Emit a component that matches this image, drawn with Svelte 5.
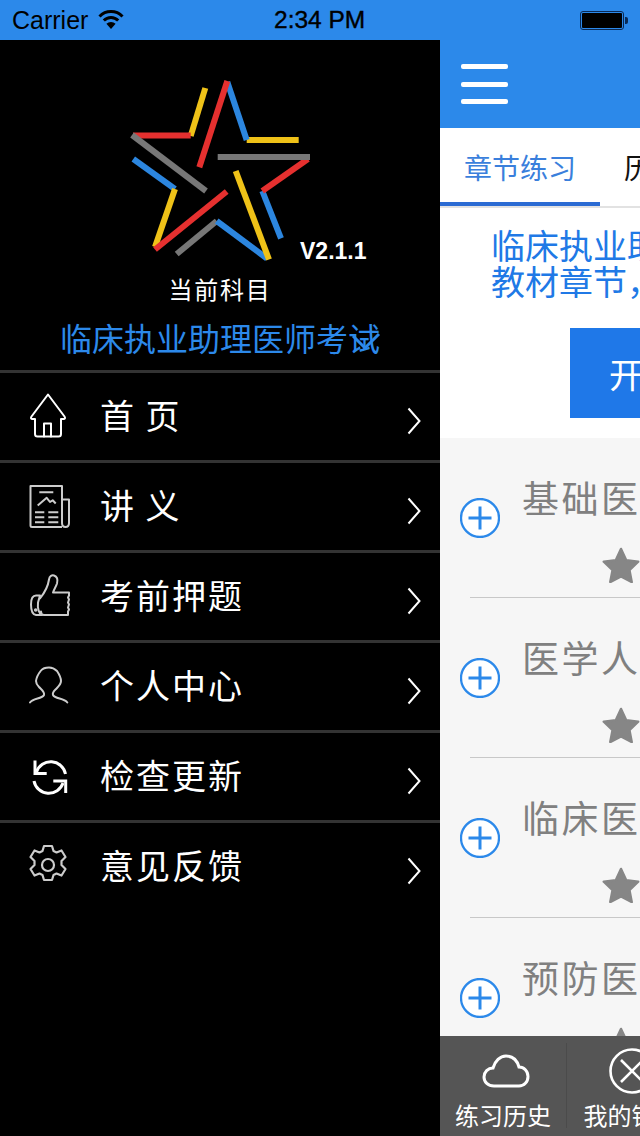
<script>
  const menu = [
    { label: '首 页', icon: 'home' },
    { label: '讲 义', icon: 'news' },
    { label: '考前押题', icon: 'thumb' },
    { label: '个人中心', icon: 'user' },
    { label: '检查更新', icon: 'sync' },
    { label: '意见反馈', icon: 'gear' }
  ];
  const logo = [
    ['y', 205.3, 88, 190.7, 136], ['r', 133, 135.5, 190.7, 135.5], ['g', 132, 135, 206, 191],
    ['b', 133.3, 159, 175, 189], ['y', 175, 189, 155, 247], ['r', 155, 249.5, 226.7, 191.5],
    ['g', 176.7, 254, 216.7, 221], ['b', 216.7, 221, 267, 258.5], ['y', 269, 259.5, 235.7, 171],
    ['b', 281, 238.3, 262.3, 191], ['r', 262.3, 191, 308, 159], ['g', 217.7, 157, 310, 157],
    ['y', 246.7, 140, 298.7, 140], ['b', 246.7, 140, 227.3, 82], ['r', 227.3, 81, 199.3, 167.3]
  ];
  const colors = { y: '#efc218', r: '#e5302f', g: '#777777', b: '#2c86df' };
  const rows = ['基础医学综合', '医学人文综合', '临床医学综合', '预防医学综合'];
</script>

<div class="screen">
  <header class="status">
    <span class="carrier">Carrier</span>
    <svg class="wifi" viewBox="0 0 26 20" width="26" height="20">
      <path d="M1.5 7.5a16 16 0 0 1 23 0" fill="none" stroke="#000" stroke-width="3"/>
      <path d="M5.8 11.5a10 10 0 0 1 14.4 0" fill="none" stroke="#000" stroke-width="3"/>
      <path d="M13 20l-4.6-5.2a6.5 6.5 0 0 1 9.2 0z" fill="#000"/>
    </svg>
    <span class="time">2:34 PM</span>
    <span class="battery"><i></i></span>
  </header>

  <div class="body">
    <aside class="side">
      <div class="brand">
        <svg class="logo" viewBox="120 70 200 200" width="200" height="200">
          {#each logo as [c, x1, y1, x2, y2]}
            <line {x1} {y1} {x2} {y2} stroke={colors[c]} stroke-width="6" />
          {/each}
        </svg>
        <span class="version">V2.1.1</span>
        <div class="current">当前科目</div>
        <div class="subject">临床执业助理医师考试<svg class="mark" viewBox="0 0 30 22" width="30" height="22"><path d="M2 5l12 12L28 3" fill="none" stroke="#2c89ea" stroke-width="3"/></svg></div>
      </div>

      <nav>
        {#each menu as item}
          <div class="item">
            <svg class="ico" viewBox="0 0 44 48" width="44" height="48" fill="none" stroke="#fff" stroke-width="2" stroke-linejoin="round" stroke-linecap="round">
              {#if item.icon === 'home'}
                <path d="M21 1.500L4.500 23.500c-1 1.500-.5 2.500 1 2.500H8V41c0 1.500 1 2.500 2.500 2.500h21c1.500 0 2.500-1 2.500-2.500V26h2.500c1.500 0 2-1 1-2.500z"/>
                <path d="M17 43.500V30.500h7v13"/>
              {:else if item.icon === 'news'}
                <g stroke="#ccc" stroke-linecap="butt">
                  <path d="M35 44H5c-1 0-1.500-.5-1.500-1.500V3H35v37c0 2.500 1 4 3.500 4s3.500-2 3.500-4V16.500h-7"/>
                  <path d="M12.300 9.200h14M10.700 22.500l9-7.700 3.300 4.200 2.700-1.700 3 3.200M8 29.200h9.300M21.300 29.200h10M8 34.200h9.300M21.300 34.200h10M8 39.200h9.300M21.300 39.200h10"/>
                </g>
              {:else if item.icon === 'thumb'}
                <g stroke="#ccc" transform="translate(0 1.500)">
                  <path d="M13 24C17 19 21 12 22 5c.5-4 3-4.500 5-4 3 1 4 4 3 8-1 3-3 6-4 9h16v3l-1 2 1 2-1 3 1 2-1 3 1 2-1 2v3.500H17c-2 0-3-1.500-3-3.500"/>
                  <path d="M13 21H9c-4 0-5 3-5 9s1 10 5 10.500h6M13 21l-2 7c-.5 5 0 10 4 12.500"/>
                  <circle cx="8.700" cy="35.500" r=".8" fill="#ccc"/>
                </g>
              {:else if item.icon === 'user'}
                <path stroke="#ccc" d="M3 39.500C6 35 15 36 17 32c1-3-2-5-5-8-2-2-3-4-3-6 .5-4 3-8 5-10.500 2-2.500 5-3 8-3 4 0 6 1.500 8 3.500 2 3 4 6 4 10 0 2-2 5-4 7-3 3-5 4-4 7 2 4 11 3 14.300 7.500"/>
              {:else if item.icon === 'sync'}
                <g stroke-width="3" stroke-linecap="butt" stroke-linejoin="miter">
                  <path d="M9.500 19A15 15 0 0 1 38.500 21"/>
                  <path d="M7 28A15 15 0 0 0 36 30"/>
                  <path d="M8 7.500V20.500h11.700"/>
                  <path d="M38.700 40V28H26.300"/>
                </g>
              {:else}
                <g stroke="#ccc" stroke-width="2.200" transform="translate(-2 -2)">
                  <path d="M19 5h8l1.500 5 3 1.500 5-2 4 6.500-4 4v4l4 4-4 6.500-5-2-3 1.500-1.500 5h-8l-1.500-5-3-1.500-5 2-4-6.500 4-4v-4l-4-4 4-6.500 5 2 3-1.500z"/>
                  <circle cx="23" cy="24" r="6"/>
                </g>
              {/if}
            </svg>
            <span class="label">{item.label}</span>
            <svg class="chev" viewBox="0 0 14 28" width="14" height="28"><path d="M1.500 1.500L12.500 14 1.500 26.500" fill="none" stroke="#fff" stroke-width="2"/></svg>
          </div>
        {/each}
      </nav>
    </aside>

    <main class="main">
      <div class="topbar">
        <div class="burger"><i></i><i></i><i></i></div>
      </div>
      <div class="tabs">
        <div class="tab active">章节练习</div>
        <div class="tab">历年真题</div>
      </div>
      <div class="intro">
        <p>临床执业助理医师考试<br />教材章节，分章节练习</p>
        <button class="start">开始练习</button>
      </div>
      <div class="list">
        {#each rows as title}
          <div class="row">
            <svg class="plus" viewBox="0 0 40 40" width="40" height="40">
              <circle cx="20" cy="20" r="19" fill="#fff" stroke="#2c89ea" stroke-width="2.300"/>
              <path d="M8.500 20h23M20 8.500v23" stroke="#2c89ea" stroke-width="3"/>
            </svg>
            <div class="rowbody">
              <div class="title">{title}</div>
              <svg class="star" viewBox="0 0 38 36" width="38" height="36"><path d="M19 2l5.200 11.200 12 1.500-8.800 8.300 2.300 12L19 29.300 8.300 35l2.300-12-8.800-8.300 12-1.500z" fill="#868686" stroke="#868686" stroke-linejoin="round" stroke-width="2.500"/></svg>
            </div>
          </div>
        {/each}
      </div>
      <div class="tabbar">
        <div class="tb">
          <svg class="cloud" viewBox="0 0 48 36" width="48" height="36"><path d="M12 33C6 33 2 29 2 24c0-5 4-9 9-9 2-7 7-12 13-12 7 0 11 4 13 11 5 0 9 4 9 9.500S42 33 37 33z" fill="none" stroke="#fff" stroke-width="3"/></svg>
          <span>练习历史</span>
        </div>
        <div class="tb">
          <svg viewBox="0 0 46 46" width="46" height="46"><circle cx="23" cy="23" r="21.500" fill="none" stroke="#fff" stroke-width="2.600"/><path d="M12 12l22 22M34 12L12 34" stroke="#fff" stroke-width="2.600"/></svg>
          <span>我的错题</span>
        </div>
      </div>
    </main>
  </div>
</div>

<style>
  :global(body) { margin: 0; background: #000; }
  .screen {
    width: 640px; height: 1136px; overflow: hidden; display: flex; flex-direction: column;
    font-family: "Noto Sans CJK SC", "Liberation Sans", sans-serif;
  }
  .status {
    height: 40px; flex: none; background: #2c89ea; position: relative; display: flex; align-items: center;
    padding: 0 12px; box-sizing: border-box; color: #000; font: 25px "Liberation Sans", sans-serif;
  }
  .carrier { margin-right: 10px; }
  .wifi { margin-top: -2px; }
  .time { position: absolute; left: 274px; font-size: 24.500px; -webkit-text-stroke: 0.4px #000; }
  .battery {
    position: absolute; left: 580px; top: 11px; width: 44px; height: 19px; box-sizing: border-box;
    border: 1px solid #0a2a55; border-radius: 3px; padding: 1px;
  }
  .battery i { display: block; height: 100%; background: #000; border-radius: 1px; }
  .battery::after {
    content: ""; position: absolute; left: 44px; top: 5px; width: 3px; height: 7px; background: #0a2a55; border-radius: 0 2px 2px 0;
  }
  .body { flex: 1; display: flex; min-height: 0; }
  .side { flex: 0 0 440px; background: #000; color: #fff; }
  .brand { height: 330px; position: relative; display: flex; flex-direction: column; align-items: center; }
  .logo { display: block; margin-top: 30px; }
  .version {
    position: absolute; left: 300px; top: 198px; font: bold 23px "Liberation Sans", sans-serif;
  }
  .current { font-size: 24px; letter-spacing: 1.700px; line-height: 34px; margin-top: 2px; }
  .subject { position: relative; font-size: 32px; line-height: 44px; color: #2c89ea; margin-top: 9px; }
  .mark { position: absolute; right: -1px; top: 16px; }
  .item {
    height: 90px; box-sizing: border-box; border-top: 3px solid #333; display: flex; align-items: center; position: relative;
    padding-left: 27px;
  }
  .ico { flex: none; }
  .label { margin: 0 0 4px 29px; font-size: 34px; letter-spacing: 2px; white-space: pre; }
  .chev { position: absolute; left: 407px; top: 34px; }
  .main { flex: 0 0 640px; display: flex; flex-direction: column; background: #fff; position: relative; min-height: 0; }
  .topbar { height: 88px; flex: none; background: #2c89ea; display: flex; align-items: center; padding-left: 21px; }
  .burger { display: flex; flex-direction: column; gap: 12.500px; width: 47px; }
  .burger i { display: block; height: 5px; border-radius: 2px; background: #fff; }
  .tabs { height: 80px; flex: none; display: flex; border-bottom: 2px solid #e2e2e2; box-sizing: border-box; }
  .tab { width: 160px; height: 78px; box-sizing: border-box; text-align: center; font-size: 28px; line-height: 78px; color: #111; }
  .tab.active { color: #3a7fdc; border-bottom: 4px solid #2b6bd3; }
  .intro { height: 230px; flex: none; padding-left: 51px; box-sizing: border-box; }
  .intro p { margin: 0; padding-top: 19px; font-size: 34px; line-height: 36px; color: #2079e6; white-space: nowrap; }
  .start {
    display: block; margin: 29px 0 0 79px; width: 300px; height: 90px; border: 0; background: #1f78e8; color: #fff;
    font: 34px "Noto Sans CJK SC", sans-serif; padding: 0; text-align: left; text-indent: 39px;
  }
  .list { flex: 1; min-height: 0; background: #f6f6f6; overflow: hidden; }
  .row { height: 160px; display: flex; align-items: center; padding-left: 20px; position: relative; }
  .row::after { content: ""; position: absolute; left: 30px; right: 0; bottom: 0; height: 1px; background: #c8c8c8; }
  .plus { flex: none; }
  .rowbody { flex: 1; height: 160px; padding-left: 22px; box-sizing: border-box; position: relative; }
  .title { font-size: 37px; letter-spacing: 2.500px; line-height: 50px; color: #808080; margin-top: 34px; white-space: nowrap; }
  .star { position: absolute; left: 102px; top: 109px; }
  .tabbar { height: 100px; flex: none; background: #555; display: flex; }
  .tb { width: 126px; height: 100px; position: relative; display: flex; flex-direction: column; align-items: center; color: #fff; font-size: 24px; }
  .tb + .tb::before { content: ""; position: absolute; left: 0; top: 7px; bottom: 8px; border-left: 1px solid #4b4b4b; }
  .tb svg { display: block; margin-top: 17px; height: 36px; }
  .cloud { margin-left: 5px; }
  .tb span { position: absolute; top: 62px; line-height: 34px; white-space: nowrap; }
  .tb:first-child span { left: 15px; }
  .tb + .tb { width: 131px; }
  .tb + .tb svg { height: 46px; margin-top: 12px; }
</style>
